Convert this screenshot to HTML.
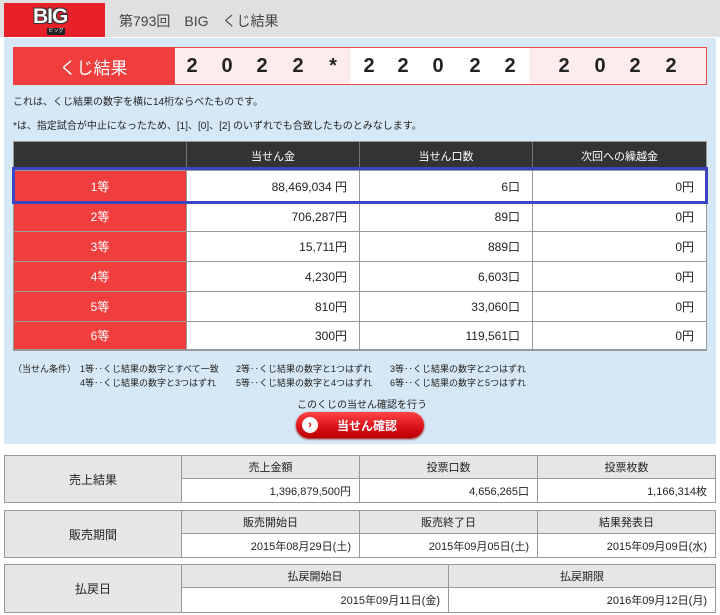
<!DOCTYPE html><html><head><meta charset="utf-8"><style>
*{margin:0;padding:0;box-sizing:border-box}
body{width:720px;height:615px;background:#fff;position:relative;font-family:"Liberation Sans","Noto Sans CJK JP",sans-serif;color:#222;overflow:hidden}
.a{position:absolute}
.c{display:flex;align-items:center;justify-content:center}
.r{display:flex;align-items:center;justify-content:flex-end;padding-right:12px}
.cell{position:absolute;border:1px solid #999;font-size:11px}
.dg{position:absolute;top:55px;width:20px;margin-left:-10px;text-align:center;font:bold 20px 'Liberation Sans',sans-serif;color:#222}
</style></head><body>
<div class="a" style="left:0;top:0;width:720px;height:37px;background:#e0e0e0"></div>
<div class="a" style="left:4px;top:3px;width:101px;height:34px;background:#e8202a"></div>
<div class="a" style="left:33px;top:5px;font:900 21px 'Liberation Sans',sans-serif;color:#fff;text-shadow:1px 1px 0 #333,-1px -1px 0 #333,1px -1px 0 #333,-1px 1px 0 #333;letter-spacing:-1px">BIG</div>
<div class="a" style="left:47px;top:28px;width:18px;height:7px;background:#222;color:#fff;font-size:5px;line-height:7px;text-align:center">ビッグ</div>
<div class="a" style="left:119px;top:11px;font-size:14px;color:#444">第793回　BIG　くじ結果</div>
<div class="a" style="left:4px;top:38px;width:712px;height:406px;background:#d6e8f6"></div>
<div class="a c" style="left:13px;top:47px;width:161px;height:38px;background:#f03e3e;color:#fff;font-size:17px">くじ結果</div>
<div class="a" style="left:174px;top:47px;width:533px;height:38px;background:#fff;border:1px solid #e84b4b"></div>
<div class="a" style="left:175px;top:48px;width:176px;height:36px;background:#fdecec"></div>
<div class="a" style="left:529px;top:48px;width:177px;height:36px;background:#fdecec"></div>
<div class="dg" style="left:192px">2</div><div class="dg" style="left:227px">0</div><div class="dg" style="left:262px">2</div><div class="dg" style="left:298px">2</div><div class="dg" style="left:333px">*</div>
<div class="dg" style="left:369px">2</div><div class="dg" style="left:403px">2</div><div class="dg" style="left:438px">0</div><div class="dg" style="left:475px">2</div><div class="dg" style="left:510px">2</div>
<div class="dg" style="left:564px">2</div><div class="dg" style="left:600px">0</div><div class="dg" style="left:635px">2</div><div class="dg" style="left:671px">2</div>
<div class="a" style="left:13px;top:93px;font-size:10px">これは、くじ結果の数字を横に14桁ならべたものです。</div>
<div class="a" style="left:13px;top:117px;font-size:10px">*は、指定試合が中止になったため、[1]、[0]、[2] のいずれでも合致したものとみなします。</div>
<div class="a" style="left:13px;top:141px;width:694px;height:210px;background:#999"></div>
<div class="a" style="left:14px;top:142px;width:692px;height:27px;background:#333"></div>
<div class="a c" style="left:186px;top:142px;width:173px;height:27px;color:#fff;font-size:11px;border-left:1px solid #777">当せん金</div>
<div class="a c" style="left:359px;top:142px;width:173px;height:27px;color:#fff;font-size:11px;border-left:1px solid #777">当せん口数</div>
<div class="a c" style="left:532px;top:142px;width:174px;height:27px;color:#fff;font-size:11px;border-left:1px solid #777">次回への繰越金</div>
<div id="rows"></div>
<script>
var d=[["1等","88,469,034 円","6口","0円"],["2等","706,287円","89口","0円"],["3等","15,711円","889口","0円"],["4等","4,230円","6,603口","0円"],["5等","810円","33,060口","0円"],["6等","300円","119,561口","0円"]];
var y=[171,202,232,262,292,322,350],h="";
d.forEach(function(r,i){var t=y[i],ht=y[i+1]-y[i]-1;
h+='<div class="a c" style="left:14px;top:'+t+'px;width:172px;height:'+ht+'px;background:#f03e3e;color:#fff;font-size:12px">'+r[0]+'</div>';
[[187,172],[360,172],[533,173]].forEach(function(c,j){h+='<div class="a r" style="left:'+c[0]+'px;top:'+t+'px;width:'+c[1]+'px;height:'+ht+'px;background:#fff;font-size:12px">'+r[j+1]+'</div>';});});
document.getElementById('rows').innerHTML=h;
</script>
<div class="a" style="left:12px;top:167px;width:696px;height:37px;border:3px solid #3b44c4"></div>
<div class="a" style="left:13px;top:362px;font-size:9px;line-height:14px">（当せん条件）</div>
<div class="a" style="left:80px;top:362px;font-size:9px;line-height:14px">1等‥くじ結果の数字とすべて一致<br>4等‥くじ結果の数字と3つはずれ</div>
<div class="a" style="left:236px;top:362px;font-size:9px;line-height:14px">2等‥くじ結果の数字と1つはずれ<br>5等‥くじ結果の数字と4つはずれ</div>
<div class="a" style="left:390px;top:362px;font-size:9px;line-height:14px">3等‥くじ結果の数字と2つはずれ<br>6等‥くじ結果の数字と5つはずれ</div>
<div class="a" style="left:297px;top:396px;font-size:10px">このくじの当せん確認を行う</div>
<div class="a c" style="left:296px;top:412px;width:128px;height:26px;border-radius:13px;background:linear-gradient(#f44 0%,#d8101a 60%,#b00);color:#fff;font-weight:bold;font-size:12px;box-shadow:0 1px 2px #800"><span style="position:absolute;left:6px;top:5px;width:16px;height:16px;border-radius:50%;background:#fff;color:#d00;font-size:11px;line-height:16px;text-align:center">›</span><span style="margin-left:14px">当せん確認</span></div>
<div class="cell c" style="left:4px;top:455px;width:178px;height:48px;background:#e6e6e6;font-size:12px">売上結果</div>
<div class="cell c" style="left:181px;top:455px;width:179px;height:24px;background:#e6e6e6">売上金額</div>
<div class="cell c" style="left:359px;top:455px;width:179px;height:24px;background:#e6e6e6">投票口数</div>
<div class="cell c" style="left:537px;top:455px;width:179px;height:24px;background:#e6e6e6">投票枚数</div>
<div class="cell r" style="left:181px;top:478px;width:179px;height:25px;padding-right:8px">1,396,879,500円</div>
<div class="cell r" style="left:359px;top:478px;width:179px;height:25px;padding-right:8px">4,656,265口</div>
<div class="cell r" style="left:537px;top:478px;width:179px;height:25px;padding-right:8px">1,166,314枚</div>
<div class="cell c" style="left:4px;top:510px;width:178px;height:48px;background:#e6e6e6;font-size:12px">販売期間</div>
<div class="cell c" style="left:181px;top:510px;width:179px;height:24px;background:#e6e6e6">販売開始日</div>
<div class="cell c" style="left:359px;top:510px;width:179px;height:24px;background:#e6e6e6">販売終了日</div>
<div class="cell c" style="left:537px;top:510px;width:179px;height:24px;background:#e6e6e6">結果発表日</div>
<div class="cell r" style="left:181px;top:533px;width:179px;height:25px;padding-right:8px">2015年08月29日(土)</div>
<div class="cell r" style="left:359px;top:533px;width:179px;height:25px;padding-right:8px">2015年09月05日(土)</div>
<div class="cell r" style="left:537px;top:533px;width:179px;height:25px;padding-right:8px">2015年09月09日(水)</div>
<div class="cell c" style="left:4px;top:564px;width:178px;height:49px;background:#e6e6e6;font-size:12px">払戻日</div>
<div class="cell c" style="left:181px;top:564px;width:268px;height:24px;background:#e6e6e6">払戻開始日</div>
<div class="cell c" style="left:448px;top:564px;width:268px;height:24px;background:#e6e6e6">払戻期限</div>
<div class="cell r" style="left:181px;top:587px;width:268px;height:26px;padding-right:8px">2015年09月11日(金)</div>
<div class="cell r" style="left:448px;top:587px;width:268px;height:26px;padding-right:8px">2016年09月12日(月)</div>
</body></html>
